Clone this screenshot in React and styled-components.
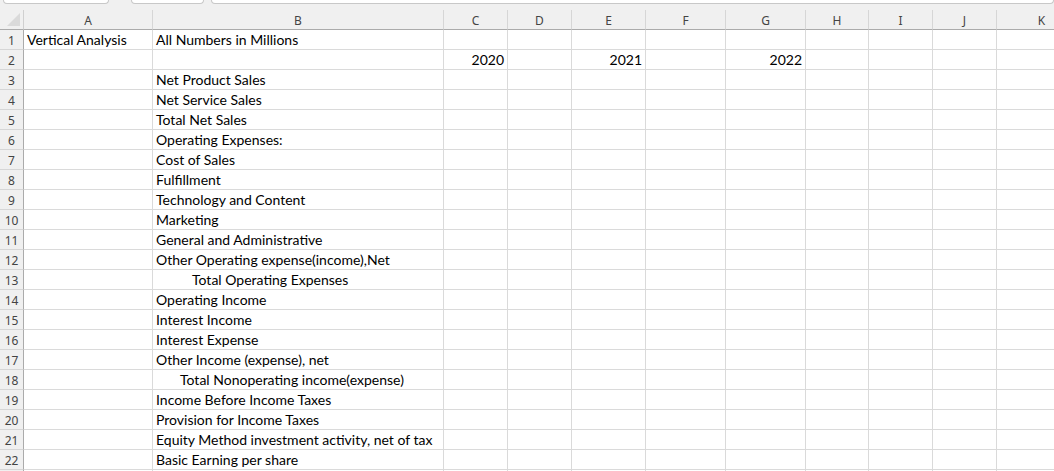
import styled, { createGlobalStyle } from 'styled-components'

const GlobalStyle = createGlobalStyle`
    html, body {
        margin: 0;
        padding: 0;
        background: #ffffff;
        overflow: hidden;
    }
`

const COLUMNS = [
    { key: 'A', width: 129 },
    { key: 'B', width: 291 },
    { key: 'C', width: 64 },
    { key: 'D', width: 64 },
    { key: 'E', width: 74 },
    { key: 'F', width: 80 },
    { key: 'G', width: 80 },
    { key: 'H', width: 63 },
    { key: 'I', width: 64 },
    { key: 'J', width: 64 },
    { key: 'K', width: 90 },
]

const ROWS = [
    { A: 'Vertical Analysis', B: 'All Numbers in Millions' },
    { C: '2020', E: '2021', G: '2022' },
    { B: 'Net Product Sales' },
    { B: 'Net Service Sales' },
    { B: 'Total Net Sales' },
    { B: 'Operating Expenses:' },
    { B: 'Cost of Sales' },
    { B: 'Fulfillment' },
    { B: 'Technology and Content' },
    { B: 'Marketing' },
    { B: 'General and Administrative' },
    { B: 'Other Operating expense(income),Net' },
    { B: 'Total Operating Expenses', indent: 36 },
    { B: 'Operating Income' },
    { B: 'Interest Income' },
    { B: 'Interest Expense' },
    { B: 'Other Income (expense), net' },
    { B: 'Total Nonoperating income(expense)', indent: 24 },
    { B: 'Income Before Income Taxes' },
    { B: 'Provision for Income Taxes' },
    { B: 'Equity Method investment activity, net of tax' },
    { B: 'Basic Earning per share' },
]

// only the top pixel of the next row shows at the bottom edge
const VISIBLE_ROWS = ROWS.length + 1

const Window = styled.div`
    width: 1054px;
    height: 471px;
    overflow: hidden;
    background: #f0f0f0;
    font-family: 'Lato', 'Liberation Sans', sans-serif;
`

const TabStrip = styled.div`
    height: 10px;
    display: flex;
    align-items: flex-start;
    background: #f0f0f0;
`

const Tab = styled.div`
    height: 3px;
    margin-left: ${props => props.$offset}px;
    width: ${props => props.$width ? `${props.$width}px` : 'auto'};
    flex: ${props => props.$width ? 'none' : '1'};
    background: #ffffff;
    border: 1px solid #c8c8c8;
    border-top: none;
    border-radius: 0 0 5px 5px;
`

const Grid = styled.div`
    display: grid;
    grid-template-columns: 24px ${COLUMNS.map(c => `${c.width}px`).join(' ')};
    grid-auto-rows: 20px;
`

const Corner = styled.div`
    position: relative;
    background: #f0f0f0;
    border-right: 1px solid #d0d0d0;
    border-bottom: 1px solid #ababab;
    box-sizing: border-box;
`

const SelectAll = styled.div`
    position: absolute;
    right: 3px;
    bottom: 3px;
    width: 0;
    height: 0;
    border-style: solid;
    border-width: 0 0 13px 13px;
    border-color: transparent transparent #dadada transparent;
`

const ColumnHeader = styled.div`
    background: #f0f0f0;
    border-right: 1px solid #d6d6d6;
    border-bottom: 1px solid #ababab;
    box-sizing: border-box;
    display: flex;
    align-items: center;
    justify-content: center;
    font-family: 'Noto Sans', 'Liberation Sans', sans-serif;
    font-size: 12px;
    color: #444444;
    padding-top: 1px;
`

const RowHeader = styled.div`
    background: #f0f0f0;
    border-right: 1px solid #ababab;
    border-bottom: 1px solid #d6d6d6;
    box-sizing: border-box;
    display: flex;
    align-items: center;
    justify-content: center;
    font-family: 'Noto Sans', 'Liberation Sans', sans-serif;
    font-size: 12px;
    color: #444444;
    padding-top: 1px;
`

const Cell = styled.div`
    background: #ffffff;
    border-right: 1px solid #dadada;
    border-bottom: 1px solid #dadada;
    box-sizing: border-box;
    display: flex;
    align-items: flex-end;
    justify-content: ${props => props.$numeric ? 'flex-end' : 'flex-start'};
    padding: 0 3px 0 ${props => 3 + (props.$indent || 0)}px;
    font-size: 14px;
    line-height: 18px;
    color: #000000;
    white-space: nowrap;
`

const Row = ({ index, row }) => (
    <>
        <RowHeader>{index <= ROWS.length ? index : null}</RowHeader>
        {COLUMNS.map(col => {
            const value = row[col.key]
            const numeric = value !== undefined && /^\d+$/.test(value)
            return (
                <Cell
                    key={col.key}
                    $numeric={numeric}
                    $indent={col.key === 'B' ? row.indent : 0}
                >
                    {value}
                </Cell>
            )
        })}
    </>
)

const App = () => {
    const rows = Array.from({ length: VISIBLE_ROWS }, (_, i) => ROWS[i] || {})

    return (
        <>
            <GlobalStyle />
            <Window>
                <TabStrip>
                    <Tab $offset={3} $width={104} />
                    <Tab $offset={22} $width={71} />
                    <Tab $offset={7} />
                </TabStrip>
                <Grid>
                    <Corner><SelectAll /></Corner>
                    {COLUMNS.map(col => (
                        <ColumnHeader key={col.key}>{col.key}</ColumnHeader>
                    ))}
                    {rows.map((row, i) => (
                        <Row key={i} index={i + 1} row={row} />
                    ))}
                </Grid>
            </Window>
        </>
    )
}

export default App
